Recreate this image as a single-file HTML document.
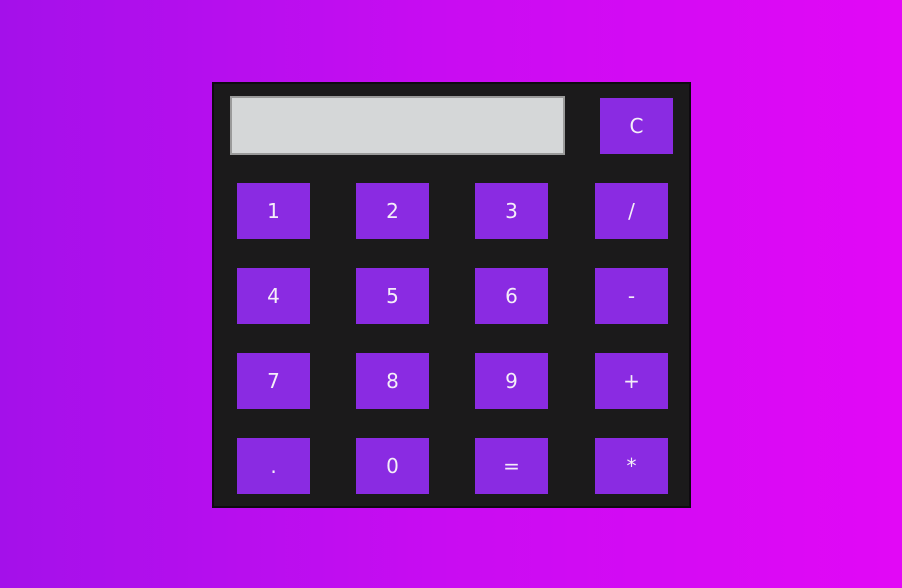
<!DOCTYPE html>
<html><head><style>
html,body{margin:0;padding:0;}
body{width:902px;height:588px;background:linear-gradient(90deg,#a410ea 0%,#c90cf2 50%,#e208f6 100%);position:relative;overflow:hidden;font-family:"DejaVu Sans","Liberation Sans",sans-serif;}
.calc{position:absolute;left:212px;top:82px;width:475px;height:422px;background:#1b1a1b;border:2px solid #0e0a10;}
.disp{position:absolute;left:230px;top:96px;width:331px;height:55px;background:#d5d7d8;border:2px solid #9a9a9a;}
.b{position:absolute;width:73px;height:56px;background:#8a2be2;color:#f4eef8;font-size:20px;line-height:56px;text-align:center;}
</style></head><body>
<div class="calc"></div>
<div class="disp"></div>
<div class="b" style="left:600px;top:98px">C</div>
<div class="b" style="left:237px;top:183px">1</div>
<div class="b" style="left:356px;top:183px">2</div>
<div class="b" style="left:475px;top:183px">3</div>
<div class="b" style="left:595px;top:183px">/</div>
<div class="b" style="left:237px;top:268px">4</div>
<div class="b" style="left:356px;top:268px">5</div>
<div class="b" style="left:475px;top:268px">6</div>
<div class="b" style="left:595px;top:268px">-</div>
<div class="b" style="left:237px;top:353px">7</div>
<div class="b" style="left:356px;top:353px">8</div>
<div class="b" style="left:475px;top:353px">9</div>
<div class="b" style="left:595px;top:353px">+</div>
<div class="b" style="left:237px;top:438px">.</div>
<div class="b" style="left:356px;top:438px">0</div>
<div class="b" style="left:475px;top:438px">=</div>
<div class="b" style="left:595px;top:438px">*</div>
</body></html>
